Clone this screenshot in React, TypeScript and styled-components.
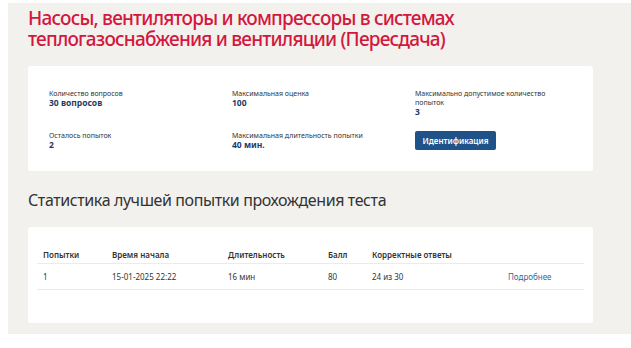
import React from "react";
import styled, { createGlobalStyle } from "styled-components";

const Global = createGlobalStyle`
  html, body { margin: 0; padding: 0; background: #ffffff; }
  body { font-family: "Noto Sans", "Open Sans", sans-serif; }
`;

const Page = styled.div`
  padding: 3px 0 0 8px;
  width: 631px;
  height: 348px;
  box-sizing: border-box;
  overflow: hidden;
`;

const Panel = styled.main`
  background: #f2f1ee;
  padding: 5px 0 11px 20px;
  width: 640px;
  box-sizing: border-box;
`;

const Title = styled.h1`
  margin: 0;
  width: 565px;
  font-family: "Noto Sans", sans-serif;
  font-weight: 500;
  font-size: 19px;
  line-height: 21px;
  letter-spacing: -0.8px;
  color: #d3183d;
`;

const Card = styled.section<{ $mt: number; $h: number }>`
  margin-top: ${(p) => p.$mt}px;
  width: 565px;
  height: ${(p) => p.$h}px;
  box-sizing: border-box;
  background: #ffffff;
  border-radius: 3px;
`;

const InfoGrid = styled.div`
  display: grid;
  grid-template-columns: 183px 183px 160px;
  grid-template-rows: 42px auto;
  padding: 23px 0 0 21px;
`;

const Item = styled.div<{ $narrow?: boolean }>`
  display: flex;
  flex-direction: column;
  align-items: flex-start;
  max-width: ${(p) => (p.$narrow ? "132px" : "none")};
`;

const Label = styled.div`
  font-size: 7px;
  line-height: 9px;
  color: #333333;
`;

const Value = styled.div`
  font-size: 8.5px;
  line-height: 10px;
  font-weight: 700;
  color: #1c3c68;
`;

const Button = styled.button`
  margin-top: 0px;
  width: 81px;
  height: 19px;
  border: none;
  border-radius: 2px;
  background: #1e5289;
  color: #ffffff;
  font-family: "Noto Sans", sans-serif;
  font-weight: 600;
  font-size: 8px;
  padding: 0;
  cursor: pointer;
`;

const Heading = styled.h2`
  margin: 18px 0 0 0;
  font-family: "Noto Sans", sans-serif;
  font-weight: 400;
  font-size: 16px;
  line-height: 22px;
  letter-spacing: -0.4px;
  color: #333333;
`;

const TableWrap = styled.div`
  padding: 19px 9px 0 9px;
`;

const Table = styled.table`
  width: 547px;
  border-collapse: collapse;
  table-layout: fixed;
`;

const Th = styled.th<{ $w?: number }>`
  box-sizing: border-box;
  width: ${(p) => (p.$w ? `${p.$w}px` : "auto")};
  text-align: left;
  padding: 0 0 0 6px;
  height: 17px;
  font-size: 8px;
  font-weight: 600;
  color: #333333;
  border-bottom: 1px solid #ebebeb;
`;

const Td = styled.td<{ $link?: boolean }>`
  padding: 0 0 0 6px;
  height: 25px;
  font-size: 8px;
  color: ${(p) => (p.$link ? "#3a6596" : "#333333")};
  border-bottom: 1px solid #ebebeb;
`;

export default function App() {
  return (
    <>
      <Global />
      <Page>
        <Panel>
          <Title>
            Насосы, вентиляторы и компрессоры в системах теплогазоснабжения и
            вентиляции (Пересдача)
          </Title>
          <Card $mt={16} $h={105}>
            <InfoGrid>
              <Item>
                <Label>Количество вопросов</Label>
                <Value>30 вопросов</Value>
              </Item>
              <Item>
                <Label>Максимальная оценка</Label>
                <Value>100</Value>
              </Item>
              <Item $narrow>
                <Label>Максимально допустимое количество попыток</Label>
                <Value>3</Value>
              </Item>
              <Item>
                <Label>Осталось попыток</Label>
                <Value>2</Value>
              </Item>
              <Item>
                <Label>Максимальная длительность попытки</Label>
                <Value>40 мин.</Value>
              </Item>
              <Item>
                <Button>Идентификация</Button>
              </Item>
            </InfoGrid>
          </Card>
          <Heading>Статистика лучшей попытки прохождения теста</Heading>
          <Card $mt={16} $h={96}>
            <TableWrap>
              <Table>
                <thead>
                  <tr>
                    <Th $w={69}>Попытки</Th>
                    <Th $w={116}>Время начала</Th>
                    <Th $w={100}>Длительность</Th>
                    <Th $w={44}>Балл</Th>
                    <Th $w={136}>Корректные ответы</Th>
                    <Th />
                  </tr>
                </thead>
                <tbody>
                  <tr>
                    <Td>1</Td>
                    <Td>15-01-2025 22:22</Td>
                    <Td>16 мин</Td>
                    <Td>80</Td>
                    <Td>24 из 30</Td>
                    <Td $link>Подробнее</Td>
                  </tr>
                </tbody>
              </Table>
            </TableWrap>
          </Card>
        </Panel>
      </Page>
    </>
  );
}
